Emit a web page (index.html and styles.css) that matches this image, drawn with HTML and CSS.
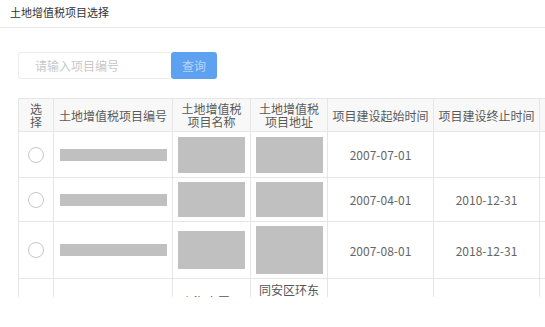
FILE: index.html
```html
<!DOCTYPE html>
<html lang="zh-CN">
<head>
<meta charset="utf-8">
<title>土地增值税项目选择</title>
<link rel="stylesheet" href="styles.css">
</head>
<body>
<div class="title">土地增值税项目选择</div>
<div class="search">
  <input class="search-input" type="text" placeholder="请输入项目编号">
  <button class="search-btn" type="button">查询</button>
</div>
<div class="table-wrap">
  <table class="grid">
    <colgroup>
      <col class="c-sel"><col class="c-no"><col class="c-name"><col class="c-addr"><col class="c-date"><col class="c-date2"><col class="c-more">
    </colgroup>
    <thead>
      <tr class="head">
        <th class="th-sel">选择</th>
        <th>土地增值税项目编号</th>
        <th>土地增值税项目名称</th>
        <th>土地增值税项目地址</th>
        <th>项目建设起始时间</th>
        <th>项目建设终止时间</th>
        <th>项目状态</th>
      </tr>
    </thead>
    <tbody>
      <tr class="r1">
        <td><span class="radio"></span></td>
        <td><span class="bar"></span></td>
        <td><span class="blk b36"></span></td>
        <td><span class="blk b36"></span></td>
        <td>2007-07-01</td>
        <td></td>
        <td></td>
      </tr>
      <tr class="r2">
        <td><span class="radio"></span></td>
        <td><span class="bar"></span></td>
        <td><span class="blk b35"></span></td>
        <td><span class="blk b35"></span></td>
        <td>2007-04-01</td>
        <td>2010-12-31</td>
        <td></td>
      </tr>
      <tr class="r3">
        <td><span class="radio"></span></td>
        <td><span class="bar"></span></td>
        <td><span class="blk b38"></span></td>
        <td><span class="blk b48"></span></td>
        <td>2007-08-01</td>
        <td>2018-12-31</td>
        <td></td>
      </tr>
      <tr class="r4">
        <td><span class="radio"></span></td>
        <td><span class="bar"></span></td>
        <td class="txt">上海大厦项目二期</td>
        <td class="txt addr">同安区环东海域新城片区</td>
        <td>2009-03-01</td>
        <td>2019-12-31</td>
        <td></td>
      </tr>
    </tbody>
  </table>
</div>
</body>
</html>
```

FILE: styles.css
```css
* { box-sizing: border-box; }
body {
  margin: 0;
  background: #fff;
  font-family: "Noto Sans CJK SC", "Noto Sans", sans-serif;
  font-size: 12px;
  color: #333;
  overflow: hidden;
}
.title {
  height: 28px;
  padding: 5px 10px 0;
  line-height: 14px;
  font-size: 11px;
  color: #333;
  border-bottom: 1px solid #e8e8e8;
}
.search {
  display: flex;
  margin: 24px 0 0 18px;
  height: 27px;
}
.search-input {
  width: 153px;
  height: 27px;
  border: 1px solid #ededed;
  border-right: none;
  border-radius: 3px 0 0 3px;
  padding: 0 16px;
  font-family: inherit;
  font-size: 12px;
  color: #333;
  outline: none;
}
.search-input::placeholder { color: #c8c8c8; }
.search-btn {
  width: 46px;
  height: 27px;
  border: none;
  border-radius: 3px;
  background: #5fa1f1;
  color: #b9d6f9;
  font-family: inherit;
  font-size: 12px;
  padding: 0;
}
.table-wrap {
  margin: 19px 0 0 18px;
  height: 199px;
  overflow: hidden;
}
.grid {
  border-collapse: collapse;
  table-layout: fixed;
  width: 622px;
}
.c-sel { width: 35px; }
.c-no { width: 119px; }
.c-name { width: 78px; }
.c-addr { width: 77px; }
.c-date { width: 106px; }
.c-date2 { width: 106px; }
.c-more { width: 101px; }
.grid th, .grid td {
  border: 1px solid #e6e6e6;
  text-align: center;
  vertical-align: middle;
  color: #666;
  font-weight: normal;
}
.grid th {
  background: #f8f8f8;
  line-height: 13px;
  padding: 3px 3px;
  color: #5a5a5a;
}
.grid th.th-sel { padding: 3px 8px; }
.grid td { padding: 0 4px; font-size: 12px; }
.head { height: 33px; }
.r1 { height: 46px; }
.r2 { height: 44px; }
.r3 { height: 57px; }
.r4 { height: 62px; }
.grid td.txt { line-height: 16px; padding: 0 5px; color: #555; }
.grid td.addr { vertical-align: top; padding-top: 3px; }
.radio {
  display: block;
  margin: 0 auto;
  width: 16px;
  height: 16px;
  border: 1px solid #c6c6c6;
  border-radius: 50%;
}
.bar {
  display: block;
  width: 107px;
  height: 12px;
  margin: 0 auto;
  background: #c0c0c0;
}
.blk {
  display: block;
  width: 67px;
  margin: 0 auto;
  background: #c0c0c0;
}
.b35 { height: 35px; }
.b36 { height: 36px; }
.b38 { height: 38px; }
.b48 { height: 48px; }
```
